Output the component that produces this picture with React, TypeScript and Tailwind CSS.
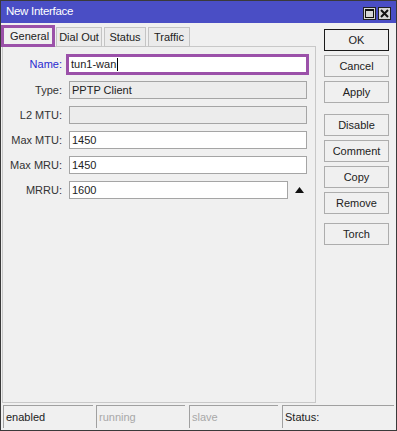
import React from "react";

const Btn = ({ label, ok, className = "" }: { label: string; ok?: boolean; className?: string }) => (
  <div
    className={`w-[65px] h-[22px] flex items-center justify-center bg-[#f0f0f0] text-[11px] text-[#222] border ${
      ok ? "border-[#1a1a1a]" : "border-[#adadad]"
    } ${className}`}
  >
    {label}
  </div>
);

const Row = ({
  label,
  value,
  readOnly,
  short,
}: {
  label: string;
  value?: string;
  readOnly?: boolean;
  short?: boolean;
}) => (
  <div className="flex items-center h-[18px]">
    <div className="w-[59px] text-right text-[11px] text-[#333] leading-none">{label}</div>
    <div
      className={`ml-[7px] h-[18px] ${short ? "w-[219px]" : "w-[238px]"} border border-[#a5a5a5] ${
        readOnly ? "bg-[#ececec]" : "bg-white"
      } flex items-center pl-[2px] text-[11px] text-[#222]`}
    >
      {value}
    </div>
    {short && (
      <svg className="ml-[7px]" width="9" height="6" viewBox="0 0 9 6">
        <polygon points="4.5,0 9,6 0,6" fill="#111" />
      </svg>
    )}
  </div>
);

export default function App() {
  return (
    <div className="w-[397px] h-[431px] border border-[#3a3a3a] bg-[#f0f0f0] flex flex-col font-['Liberation_Sans',Arial,sans-serif] select-none">
      {/* Title bar */}
      <div className="h-[22px] bg-[#4a4ec5] flex items-center justify-between pl-[5px] pr-[5px]">
        <span className="text-white text-[11.5px] tracking-[-0.3px]">New Interface</span>
        <div className="flex items-center gap-[2px] mt-[2px]">
          <div className="w-[13px] h-[13px] bg-[#d6d6d6] border border-[#222] flex items-center justify-center">
            <svg width="9" height="9" viewBox="0 0 9 9">
              <rect x="0.5" y="0.5" width="8" height="8" fill="none" stroke="#111" strokeWidth="1" />
              <rect x="0" y="0" width="9" height="2" fill="#111" />
            </svg>
          </div>
          <div className="w-[13px] h-[13px] bg-[#d6d6d6] border border-[#222] flex items-center justify-center">
            <svg width="9" height="9" viewBox="0 0 9 9">
              <path d="M1 1 L8 8 M8 1 L1 8" stroke="#111" strokeWidth="2" />
            </svg>
          </div>
        </div>
      </div>

      {/* Body */}
      <div className="flex-1 flex pb-[2px]">
        {/* Left column */}
        <div className="w-[316px] flex flex-col">
          <div className="h-[24px] flex items-end text-[11px] text-[#222]">
            <div className="relative z-10 w-[54px] h-[22px] border-[3px] border-[#9b51a9] bg-[#f0f0f0] flex items-center pl-[6px]">
              General
            </div>
            <div className="relative z-10 ml-[1px] w-[46px] h-[20px] border border-[#c4c4c4] bg-[#ebebeb] flex items-center justify-center">
              Dial Out
            </div>
            <div className="relative z-10 ml-[2px] w-[42px] h-[20px] border border-[#c4c4c4] bg-[#ebebeb] flex items-center justify-center">
              Status
            </div>
            <div className="relative z-10 ml-[2px] w-[42px] h-[20px] border border-[#c4c4c4] bg-[#ebebeb] flex items-center justify-center">
              Traffic
            </div>
          </div>
          <div className="flex-1 ml-[1px] mt-[-1px] w-[314px] border border-[#c8c8c8] pt-[7px] flex flex-col">
            <div className="flex items-center h-[21px] mb-[6px]">
              <div className="w-[59px] text-right text-[11px] text-[#2a2ad0] leading-none">Name:</div>
              <div className="ml-[4px] w-[243px] h-[21px] border-[3px] border-[#9b51a9] bg-white flex items-center pl-[2px] text-[11px] text-[#222]">
                tun1-wan
                <span className="inline-block w-[1px] h-[13px] bg-black ml-[1px]" />
              </div>
            </div>
            <div className="flex flex-col gap-[7px]">
              <Row label="Type:" value="PPTP Client" readOnly />
              <Row label="L2 MTU:" readOnly />
              <Row label="Max MTU:" value="1450" />
              <Row label="Max MRU:" value="1450" />
              <Row label="MRRU:" value="1600" short />
            </div>
          </div>
        </div>

        {/* Right column */}
        <div className="ml-[7px] pt-[6px] flex flex-col">
          <Btn label="OK" ok />
          <Btn label="Cancel" className="mt-[4px]" />
          <Btn label="Apply" className="mt-[4px]" />
          <Btn label="Disable" className="mt-[11px]" />
          <Btn label="Comment" className="mt-[4px]" />
          <Btn label="Copy" className="mt-[4px]" />
          <Btn label="Remove" className="mt-[4px]" />
          <Btn label="Torch" className="mt-[9px]" />
        </div>
      </div>

      {/* Status bar */}
      <div className="h-[23px] mb-[2px] flex pl-[2px] text-[11px]">
        <div className="w-[90px] border-t border-l border-[#a0a0a0] flex items-center pl-[2px] text-[#222]">enabled</div>
        <div className="ml-[3px] w-[89px] border-t border-l border-[#a0a0a0] flex items-center pl-[2px] text-[#a8a8a8]">running</div>
        <div className="ml-[4px] w-[89px] border-t border-l border-[#a0a0a0] flex items-center pl-[2px] text-[#a8a8a8]">slave</div>
        <div className="ml-[4px] w-[112px] border-t border-l border-[#a0a0a0] flex items-center pl-[2px] text-[#222]">Status:</div>
      </div>
    </div>
  );
}
